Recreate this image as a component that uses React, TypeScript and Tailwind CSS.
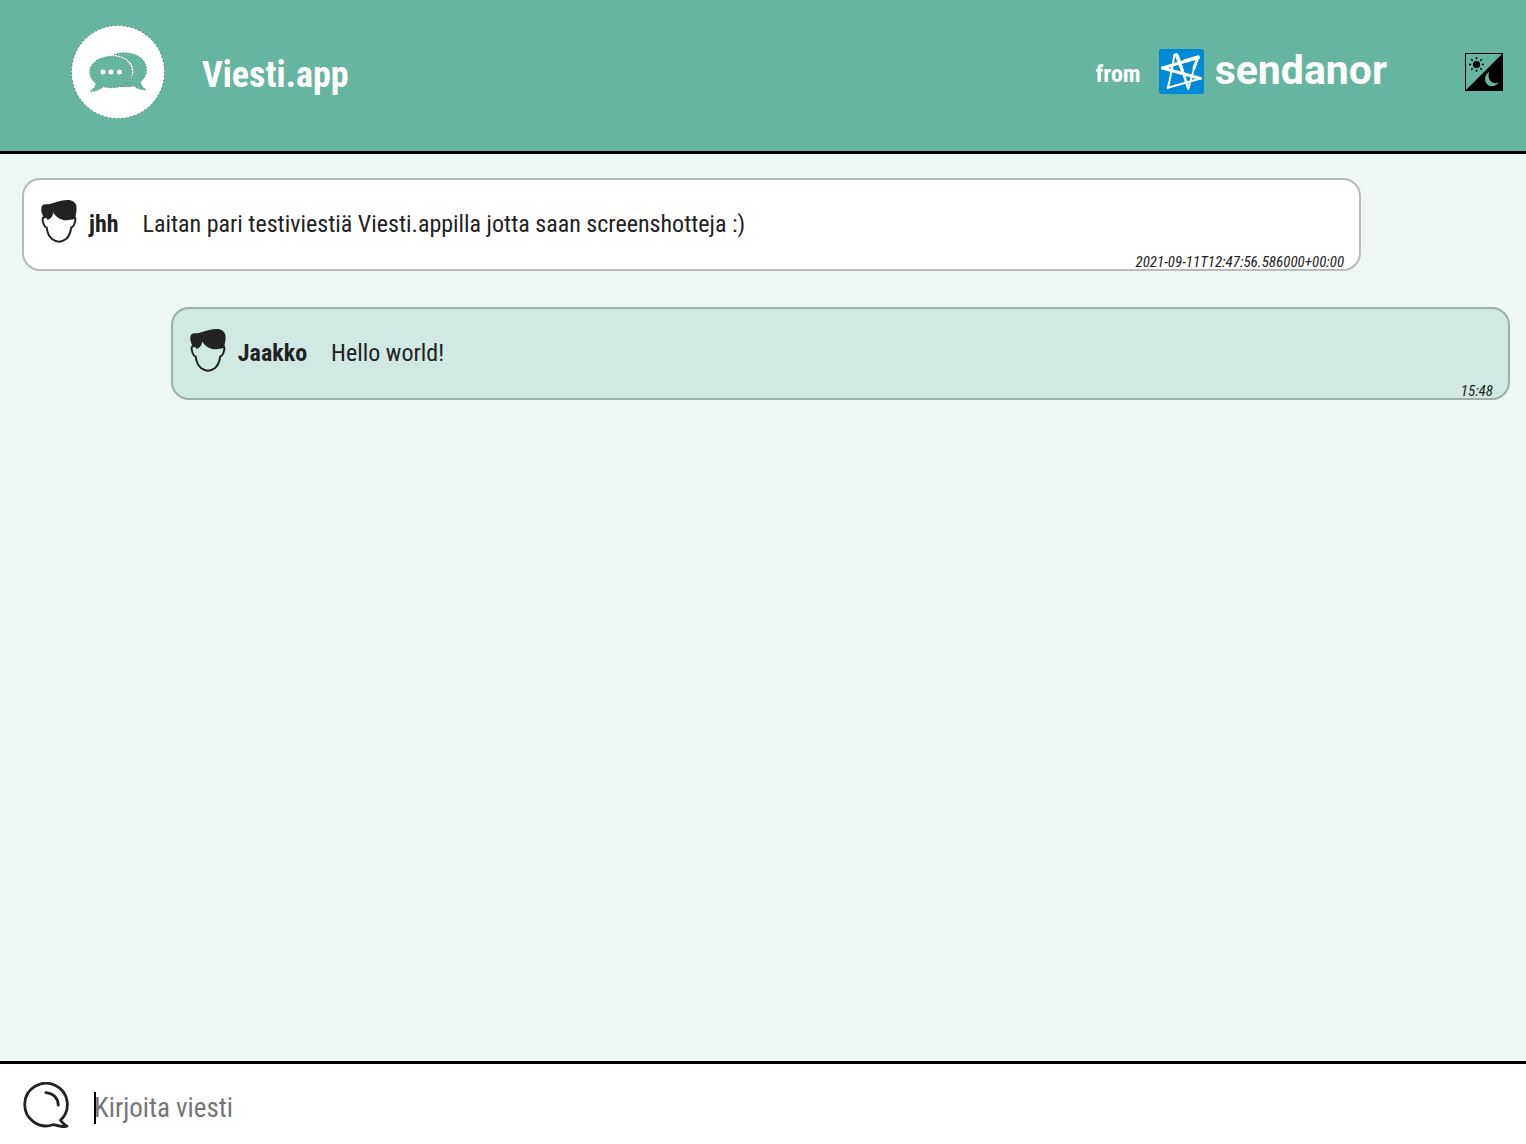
import React from "react";

function ViestiLogo() {
  return (
    <svg viewBox="0 0 94 94" className="size-[94px]" aria-hidden="true">
      <circle cx="47" cy="47" r="46.500" fill="#fff" />
      <circle cx="47" cy="47" r="46.500" fill="none" stroke="#2f4f46" strokeWidth="1" strokeDasharray="1 3" />
      <g fill="#65b5a0" stroke="#49675e" strokeWidth="0.800" strokeDasharray="1 2">
        <path d="M43 29.800C49 26.800 59 27 66 30.500C73 34 76 40 75.500 46C75.200 50.500 72.500 54.500 69.500 57C70 60 72 63 75 65C70 65 66 63.500 62.500 61C58 62.300 54 61.800 49 61.500C57 58.500 62.500 53 62.500 46C62.500 37 54 31 43 29.800Z" />
        <path d="M41 31.200C53 31.200 61 37.500 61 47C61 56.500 53 62.800 41 62.800C38 62.800 35 62.500 32.500 61.800C29 65 24 66.500 19 66.500C22 64.500 24.200 61.500 25 58.500C21 55.500 18.800 51.500 18.800 47C18.800 37.500 29 31.200 41 31.200Z" />
      </g>
      <g fill="#fff">
        <circle cx="32" cy="47" r="2.500" />
        <circle cx="40" cy="47" r="2.500" />
        <circle cx="48.500" cy="47" r="2.500" />
      </g>
    </svg>
  );
}

function SendanorMark() {
  return (
    <svg viewBox="0 0 45 45" className="size-[45px]" aria-hidden="true">
      <rect width="45" height="45" rx="2.500" fill="#008ad5" />
      <g fill="none" stroke="#fff" strokeLinecap="round" strokeLinejoin="round">
        <path d="M8.800 38.800L10.500 32L15.500 6.300" strokeWidth="2" />
        <path d="M15.500 6.300Q17.500 4.500 18.700 7L29 38.500" strokeWidth="2.600" />
        <path d="M17.500 6L23 21" strokeWidth="3.200" />
        <path d="M29.300 40L36 16" strokeWidth="1.900" />
        <path d="M35 19L39 8.500" strokeWidth="3" />
        <path d="M39 8.500L3.500 19" strokeWidth="3" />
        <path d="M39 8.200L26 12" strokeWidth="3.600" />
        <path d="M3.500 19L41.500 29.500" strokeWidth="3" />
        <path d="M41.500 29.500L8.800 38.800" strokeWidth="2.200" />
      </g>
    </svg>
  );
}

function ThemeIcon() {
  return (
    <svg viewBox="0 0 38 38" className="size-[38px]" aria-hidden="true">
      <rect x="0.500" y="0.500" width="37" height="37" fill="none" stroke="#000" strokeWidth="1" />
      <path d="M38 0V38H0Z" fill="#000" />
      <circle cx="11.500" cy="11.500" r="3.600" fill="#000" />
      <path
        d="M11.500 4V6.200M11.500 16.800V19M4 11.500H6.200M16.800 11.500H19M6.200 6.200L7.700 7.700M15.300 15.300L16.800 16.800M6.200 16.800L7.700 15.300M15.300 7.700L16.800 6.200"
        stroke="#000"
        strokeWidth="1.500"
      />
      <path d="M24.500 18.800C20 21.500 19 26 21 29.700C23.500 34.300 30 34.700 33.800 29.500C30 31 26.500 30 24.800 27C23.300 24.300 23.200 21.500 24.500 18.800Z" fill="#65b5a0" />
    </svg>
  );
}

function Avatar() {
  return (
    <svg viewBox="0 0 36 44" className="h-11 w-9 shrink-0" aria-hidden="true">
      <path
        d="M3 18C1.500 18.500 1.300 20 1.800 22C2.500 25 3 28 5.700 28.500C6.300 34 8 37.500 11 40C15.500 43.500 20.500 43.500 25 40C28 37.500 29.500 33.500 30.200 28.500C33 28 33.500 25 34.200 22C34.700 20 34.300 18.500 33 18"
        fill="none"
        stroke="#222"
        strokeWidth="2"
        strokeLinejoin="round"
      />
      <path
        d="M1.800 6C3.200 4.900 6 5.300 9 4.900C15 3.500 19 1.200 26 1C31.500 .8 34.800 3.500 35.500 7.500C36 12 34.500 16 34 20.500C31 19.800 30 21.300 26 21.300C19.500 21.300 14.500 17.500 12.300 13.500C12 17 9.500 20.200 6.300 21L5.400 18.700L3.200 19.500C1.500 16 0 13 .3 10C.4 8 .8 6.800 1.800 6Z"
        fill="#222"
      />
    </svg>
  );
}

function BubbleIcon() {
  return (
    <svg viewBox="0 0 46 46" className="size-[46px] shrink-0" aria-hidden="true">
      <g fill="none" stroke="#222" strokeWidth="2.800" strokeLinecap="round" strokeLinejoin="round">
        <path d="M37.500 38.200A21.300 21.300 0 1 0 30 42.700C33 42.300 37 46 44 44.200C41.500 43 39.500 41 37.500 38.200Z" />
        <path d="M22.800 10.600C30 11 35 16 35.300 23.200" />
      </g>
    </svg>
  );
}

type MessageProps = { name: string; text: string; time: string; own?: boolean };

function Message({ name, text, time, own }: MessageProps) {
  return (
    <li
      className={
        own
          ? "relative flex h-[93px] w-[90%] self-end rounded-[18px] border-2 border-[#9bb0aa] bg-[#d0e9e2] px-[17px] pt-[19px]"
          : "relative flex h-[93px] w-[90%] rounded-[18px] border-2 border-[#bababa] bg-white px-[17px] pt-[19px]"
      }
    >
      <Avatar />
      <strong className="mt-[9px] ml-3 text-2xl leading-8">{name}</strong>
      <p className="mt-[9px] ml-6 text-2xl leading-8">{text}</p>
      <time className="absolute right-[15px] bottom-0 text-[15px] leading-[14px] italic">{time}</time>
    </li>
  );
}

export default function App() {
  return (
    <div className="flex min-h-screen flex-col bg-[#eff7f5] font-['Roboto_Condensed','Liberation_Sans_Narrow',Roboto,sans-serif] text-[#222]">
      <header className="flex h-[154px] items-start border-b-3 border-black bg-[#65b5a0] pr-[23px] pl-[71px] text-white">
        <div className="mt-[25px]">
          <ViestiLogo />
        </div>
        <h1 className="mt-[51px] ml-[37px] text-4xl leading-12 font-bold">Viesti.app</h1>
        <a href="#sendanor" className="mt-[49px] ml-auto flex items-start">
          <span className="mt-[9px] mr-[18px] text-2xl leading-8 font-bold">from</span>
          <SendanorMark />
          <span className="ml-[11px] font-['Roboto',sans-serif] text-[41px] leading-[43px] font-bold">sendanor</span>
        </a>
        <button type="button" aria-label="Toggle theme" className="mt-[53px] ml-[78px]">
          <ThemeIcon />
        </button>
      </header>
      <main className="flex-1">
        <ul className="flex flex-col gap-9 pt-6 pr-4 pl-[22px]">
          <Message name="jhh" text="Laitan pari testiviestiä Viesti.appilla jotta saan screenshotteja :)" time="2021-09-11T12:47:56.586000+00:00" />
          <Message own name="Jaakko" text="Hello world!" time="15:48" />
        </ul>
      </main>
      <form className="flex h-[83px] items-start border-t-3 border-black bg-white pt-[18px] pl-[23px]">
        <BubbleIcon />
        <div className="relative mt-2 ml-[25px] flex-1">
          <input
            aria-label="Kirjoita viesti"
            placeholder="Kirjoita viesti"
            className="peer h-9 w-full bg-transparent text-[27px] outline-none placeholder:text-[#757575]"
          />
          <span className="pointer-events-none absolute top-0.5 left-0 h-8 w-0.5 bg-black peer-focus:hidden" />
        </div>
      </form>
    </div>
  );
}
